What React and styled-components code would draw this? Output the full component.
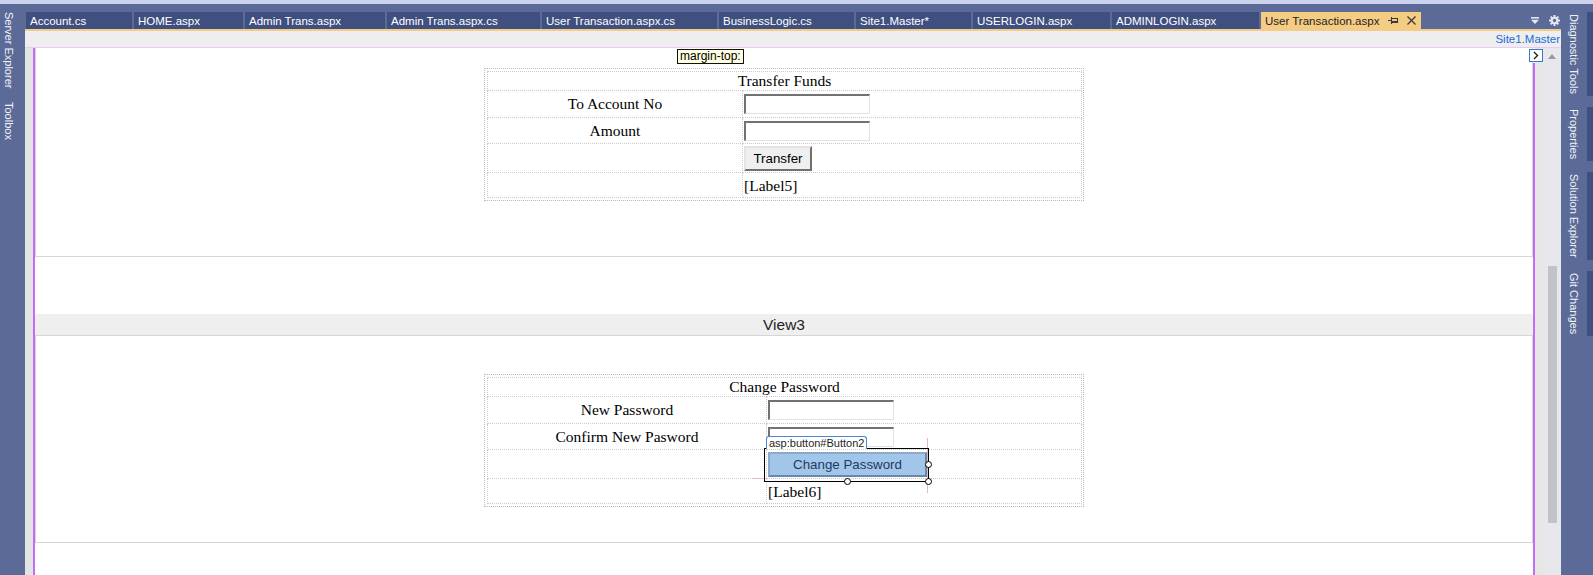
import React from "react";
import styled, { createGlobalStyle } from "styled-components";

const GlobalStyle = createGlobalStyle`
  html, body { margin: 0; padding: 0; }
  body { width: 1593px; height: 575px; overflow: hidden; background: #5c6a98; }
  #root { width: 1593px; height: 575px; }
  *, *::before, *::after { box-sizing: border-box; }
`;

const Window = styled.div`
  width: 1593px;
  height: 575px;
  display: flex;
  flex-direction: column;
  background: #5c6a98;
  font-family: "Liberation Sans", Arial, sans-serif;
  overflow: hidden;
`;

const TopStrip = styled.div`
  flex: none;
  height: 4px;
  background: #cbd3ee;
`;

const Main = styled.div`
  flex: 1;
  display: flex;
  min-height: 0;
`;

const SideDock = styled.div`
  flex: none;
  width: ${(p) => p.$width}px;
  display: flex;
  flex-direction: column;
  align-items: ${(p) => p.$align};
  gap: ${(p) => p.$gap}px;
  padding-top: 8px;
`;

const DockTab = styled.div`
  writing-mode: vertical-rl;
  color: #f1f2f7;
  font-size: 11px;
  line-height: ${(p) => p.$line}px;
  padding: ${(p) => (p.$strip ? "2px 0" : "0")};
  border-right: ${(p) => (p.$strip ? "6px solid #3e4f81" : "none")};
  white-space: nowrap;
`;

const Center = styled.div`
  flex: 1;
  min-width: 0;
  display: flex;
  flex-direction: column;
`;

const TabBar = styled.div`
  flex: none;
  height: 25px;
  display: flex;
  align-items: flex-end;
  padding-left: 1px;
`;

const TabList = styled.div`
  flex: 1;
  display: flex;
  gap: 2px;
  align-items: flex-end;
`;

const Tab = styled.div`
  flex: none;
  width: ${(p) => p.$w}px;
  height: 17px;
  display: flex;
  align-items: center;
  padding-left: 4px;
  background: ${(p) => (p.$active ? "#f5cc84" : "#3e4f80")};
  color: ${(p) => (p.$active ? "#1e1e1e" : "#ffffff")};
  font-size: 11.5px;
  white-space: nowrap;
`;

const TabName = styled.span`
  flex: 1;
`;

const TabIcon = styled.span`
  display: flex;
  align-items: center;
  margin-right: ${(p) => p.$mr}px;
`;

const TabTools = styled.div`
  flex: none;
  align-self: stretch;
  display: flex;
  align-items: center;
  gap: 10px;
  padding: 8px 1px 0 0;
`;

const AccentLine = styled.div`
  flex: none;
  height: 2px;
  background: #f5cc84;
`;

const InfoBar = styled.div`
  flex: none;
  height: 16px;
  background: #eeeeef;
  display: flex;
  align-items: center;
  justify-content: flex-end;
  padding-right: 1px;
  font-size: 11.5px;
  color: #1a6bd6;
`;

const PinkLine = styled.div`
  flex: none;
  height: 1px;
  background: #eec9f5;
`;

const Designer = styled.div`
  flex: 1;
  display: flex;
  position: relative;
  background: #ffffff;
  min-height: 0;
`;

const Gutter = styled.div`
  flex: none;
  width: 8px;
  background: #e4e4e4;
`;

const Rule = styled.div`
  flex: none;
  width: 2px;
  margin-top: ${(p) => p.$offset || 0}px;
  background: #c16cff;
`;

const Surface = styled.div`
  flex: 1;
  min-width: 0;
  position: relative;
  display: flex;
  flex-direction: column;
  background: #ffffff;
  overflow: hidden;
`;

const SideStrip = styled.div`
  flex: none;
  width: 9px;
  background: #e6e6e6;
`;

const ScrollBar = styled.div`
  flex: none;
  width: 17px;
  background: #e8e8ec;
  position: relative;
`;

const ScrollArrow = styled.div`
  position: absolute;
  left: 4px;
  top: 6px;
  width: 0;
  height: 0;
  border-left: 4.5px solid transparent;
  border-right: 4.5px solid transparent;
  border-bottom: 5px solid #9a9aa0;
`;

const ScrollThumb = styled.div`
  position: absolute;
  left: 4px;
  top: 218px;
  width: 9px;
  height: 257px;
  background: #c2c3c9;
`;

const Chevron = styled.div`
  position: absolute;
  left: 1504px;
  top: 1px;
  width: 14px;
  height: 13px;
  background: #ffffff;
  border: 1px solid #3b78d6;
  display: flex;
  align-items: center;
  justify-content: center;
  z-index: 2;
`;

const ViewBox = styled.div`
  flex: none;
  height: ${(p) => p.$h}px;
  border: 1px solid #d5d5d5;
  border-top: ${(p) => (p.$open ? "none" : "1px solid #d5d5d5")};
  padding-top: ${(p) => p.$pad}px;
`;

const Gap = styled.div`
  flex: none;
  height: ${(p) => p.$h}px;
`;

const ViewHeader = styled.div`
  flex: none;
  height: 21px;
  background: #efefef;
  display: flex;
  align-items: center;
  justify-content: center;
  font-size: 15.5px;
  color: #1e1e1e;
`;

const Tooltip = styled.div`
  position: absolute;
  left: 642px;
  top: 1px;
  height: 15px;
  padding: 0 2px;
  background: #ffffe1;
  border: 1px solid #111;
  font-size: 12px;
  line-height: 13px;
  color: #000;
  z-index: 2;
`;

const TableFrame = styled.div`
  width: 600px;
  margin: 0 auto;
  padding: 2px;
  border: 1px dotted #b9b9b9;
`;

const Grid = styled.table`
  width: 100%;
  border-collapse: collapse;
  table-layout: fixed;
  font-family: "Liberation Serif", "Times New Roman", serif;
  font-size: 15.5px;
  color: #000;
`;

const Col = styled.col`
  width: ${(p) => p.$w}px;
`;

const Row = styled.tr`
  height: ${(p) => p.$h}px;
`;

const Cell = styled.td`
  border: 1px dotted #cacaca;
  padding: ${(p) => (p.$low ? "2px 1px 0" : "0 1px")};
  text-align: ${(p) => p.$align || "left"};
  vertical-align: middle;
  white-space: nowrap;
`;

const TextBox = styled.input`
  display: block;
  width: 126px;
  height: 20px;
  margin: 0;
  padding: 0;
  background: #fff;
  border-top: 2px solid #727272;
  border-left: 2px solid #727272;
  border-right: 1px solid #e2e2e2;
  border-bottom: 1px solid #e2e2e2;
  outline: none;
`;

const PushButton = styled.button`
  display: block;
  width: ${(p) => p.$w}px;
  height: 25px;
  margin: 0;
  padding: 0;
  font-family: "Liberation Sans", Arial, sans-serif;
  font-size: 13.33px;
  color: ${(p) => (p.$selected ? "#1d3a5f" : "#000")};
  background: ${(p) => (p.$selected ? "#a2c6ea" : "#efefef")};
  border-style: solid;
  border-width: 2px;
  border-color: ${(p) =>
    p.$selected
      ? "#8fa9c6 #6b87a8 #6b87a8 #8fa9c6"
      : "#e4e4e4 #707070 #707070 #e4e4e4"};
`;

const ButtonHost = styled.div`
  position: relative;
  width: 159px;
`;

const Selection = styled.div`
  position: absolute;
  left: -4px;
  top: -4px;
  width: 165px;
  height: 34px;
  border: 1px solid #000;
  pointer-events: none;
`;

const Handle = styled.div`
  position: absolute;
  left: ${(p) => p.$x - 3}px;
  top: ${(p) => p.$y - 3}px;
  width: 7px;
  height: 7px;
  border-radius: 50%;
  background: #fff;
  border: 1px solid #000;
`;

const GuideLine = styled.div`
  position: absolute;
  left: ${(p) => p.$x}px;
  top: ${(p) => p.$y}px;
  width: ${(p) => p.$w}px;
  height: ${(p) => p.$h}px;
  background: #e2bcbc;
`;

const ElementTag = styled.div`
  position: absolute;
  left: -2px;
  top: -16px;
  height: 13px;
  padding: 0 2px;
  background: #fff;
  border: 1px solid #4a86d4;
  border-bottom: none;
  border-radius: 3px 3px 0 0;
  font-family: "Liberation Sans", Arial, sans-serif;
  font-size: 11px;
  line-height: 12px;
  color: #1e1e1e;
  white-space: nowrap;
  z-index: 3;
`;

const DropIcon = () => (
  <svg width="8" height="7" viewBox="0 0 8 7">
    <rect x="0" y="0" width="8" height="1.6" fill="#e4e7f2" />
    <path d="M0 2.8 L8 2.8 L4 7 Z" fill="#e4e7f2" />
  </svg>
);

const GearIcon = () => (
  <svg width="11" height="11" viewBox="0 0 12 12">
    <g fill="#e4e7f2">
      {[0, 45, 90, 135].map((a) => (
        <rect key={a} x="4.9" y="0" width="2.2" height="12" transform={`rotate(${a} 6 6)`} />
      ))}
      <circle cx="6" cy="6" r="4.2" />
    </g>
    <circle cx="6" cy="6" r="1.8" fill="#5c6a98" />
  </svg>
);

const PinIcon = () => (
  <svg width="11" height="9" viewBox="0 0 11 9">
    <path d="M0 4.5 H3.5 M3.5 1 V8 M3.5 2.5 H9.5 V6.5 H3.5 M3.5 5.5 H9.5" stroke="#3a3a3a" strokeWidth="1.1" fill="none" />
  </svg>
);

const CloseIcon = () => (
  <svg width="9" height="9" viewBox="0 0 9 9">
    <path d="M0.5 0.5 L8.5 8.5 M8.5 0.5 L0.5 8.5" stroke="#3a3a3a" strokeWidth="1.3" />
  </svg>
);

const ChevronIcon = () => (
  <svg width="6" height="9" viewBox="0 0 6 9">
    <path d="M1 1 L4.5 4.5 L1 8" stroke="#1e1e1e" strokeWidth="1.4" fill="none" />
  </svg>
);

const tabs = [
  { name: "Account.cs", w: 106 },
  { name: "HOME.aspx", w: 109 },
  { name: "Admin Trans.aspx", w: 140 },
  { name: "Admin Trans.aspx.cs", w: 153 },
  { name: "User Transaction.aspx.cs", w: 175 },
  { name: "BusinessLogic.cs", w: 135 },
  { name: "Site1.Master*", w: 115 },
  { name: "USERLOGIN.aspx", w: 137 },
  { name: "ADMINLOGIN.aspx", w: 147 },
];

const ROW_HEIGHTS = [19, 27, 26, 29, 25];

function FormTable({ cols, title, rows }) {
  return (
    <TableFrame>
      <Grid>
        <colgroup>
          <Col $w={cols[0]} />
          <Col $w={cols[1]} />
        </colgroup>
        <tbody>
          <Row $h={ROW_HEIGHTS[0]}>
            <Cell colSpan={2} $align="center">{title}</Cell>
          </Row>
          {rows.map((r, i) => (
            <Row key={i} $h={ROW_HEIGHTS[i + 1]}>
              <Cell $align="center">{r.label}</Cell>
              <Cell $low={r.low}>{r.content}</Cell>
            </Row>
          ))}
        </tbody>
      </Grid>
    </TableFrame>
  );
}

export default function App() {
  return (
    <>
      <GlobalStyle />
      <Window>
        <TopStrip />
        <Main>
          <SideDock $width={25} $align="flex-start" $gap={14}>
            <DockTab $line={18}>Server Explorer</DockTab>
            <DockTab $line={18}>Toolbox</DockTab>
          </SideDock>

          <Center>
            <TabBar>
              <TabList>
                {tabs.map((t) => (
                  <Tab key={t.name} $w={t.w}>
                    <TabName>{t.name}</TabName>
                  </Tab>
                ))}
                <Tab $w={160} $active>
                  <TabName>User Transaction.aspx</TabName>
                  <TabIcon $mr={8}><PinIcon /></TabIcon>
                  <TabIcon $mr={5}><CloseIcon /></TabIcon>
                </Tab>
              </TabList>
              <TabTools>
                <DropIcon />
                <GearIcon />
              </TabTools>
            </TabBar>
            <AccentLine />
            <InfoBar>Site1.Master</InfoBar>
            <PinkLine />

            <Designer>
              <Gutter />
              <Rule />
              <Surface>
                <Tooltip>margin-top:</Tooltip>
                <ViewBox $h={209} $pad={20} $open>
                  <FormTable
                    cols={[255, 339]}
                    title="Transfer Funds"
                    rows={[
                      { label: "To Account No", content: <TextBox /> },
                      { label: "Amount", content: <TextBox /> },
                      { label: "", content: <PushButton $w={68}>Transfer</PushButton> },
                      { label: "", content: "[Label5]", low: true },
                    ]}
                  />
                </ViewBox>
                <Gap $h={57} />
                <ViewHeader>View3</ViewHeader>
                <ViewBox $h={208} $pad={38}>
                  <FormTable
                    cols={[279, 315]}
                    title="Change Password"
                    rows={[
                      { label: "New Password", content: <TextBox /> },
                      { label: "Confirm New Pasword", content: <TextBox /> },
                      {
                        label: "",
                        content: (
                          <ButtonHost>
                            <GuideLine $x={159} $y={-14} $w={1} $h={55} />
                            <GuideLine $x={-15} $y={26} $w={14} $h={1} />
                            <ElementTag>asp:button#Button2</ElementTag>
                            <PushButton $w={159} $selected>Change Password</PushButton>
                            <Selection />
                            <Handle $x={160} $y={12} />
                            <Handle $x={79} $y={29} />
                            <Handle $x={160} $y={29} />
                          </ButtonHost>
                        ),
                      },
                      { label: "", content: "[Label6]", low: true },
                    ]}
                  />
                </ViewBox>
              </Surface>
              <Rule $offset={15} />
              <SideStrip />
              <ScrollBar>
                <ScrollArrow />
                <ScrollThumb />
              </ScrollBar>
              <Chevron><ChevronIcon /></Chevron>
            </Designer>
          </Center>

          <SideDock $width={32} $align="flex-end" $gap={11}>
            <DockTab $line={26} $strip>Diagnostic Tools</DockTab>
            <DockTab $line={26} $strip>Properties</DockTab>
            <DockTab $line={26} $strip>Solution Explorer</DockTab>
            <DockTab $line={26} $strip>Git Changes</DockTab>
          </SideDock>
        </Main>
      </Window>
    </>
  );
}
